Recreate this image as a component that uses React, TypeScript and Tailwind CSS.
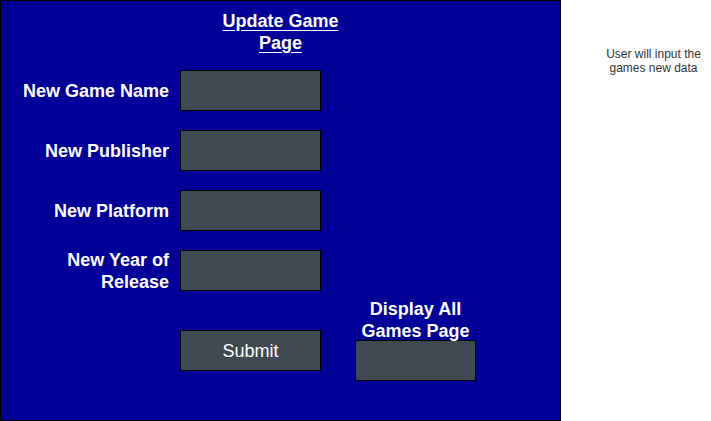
export default function App() {
  const fields = ["New Game Name", "New Publisher", "New Platform", "New Year of Release"];

  return (
    <div className="flex h-[421px] w-[711px] bg-white font-['Liberation_Sans',Arial,sans-serif]">
      <div className="flex h-[421px] w-[561px] shrink-0 flex-col border border-black bg-[#000099] pt-[10px]">
        <div className="mx-auto w-[130px] text-center text-[18px] font-bold leading-[1.2] text-white underline underline-offset-[3px]">
          Update Game Page
        </div>

        <div className="mt-[16px] grid grid-cols-[168px_141px] gap-x-[11px] gap-y-[19px]">
          {fields.map((label) => (
            <div key={label} className="contents">
              <div className="flex h-[41px] items-center justify-end pt-[2px] text-right text-[18px] font-bold leading-[1.2] text-white">
                {label}
              </div>
              <div className="h-[41px] border border-black bg-[#3f4950]" />
            </div>
          ))}
        </div>

        <div className="mt-[9px] flex items-start pl-[179px]">
          <div className="mt-[30px] flex h-[41px] w-[141px] items-center justify-center border border-black bg-[#3f4950] pt-[2px] text-[18px] text-white">
            Submit
          </div>
          <div className="ml-[34px] flex w-[121px] flex-col items-center">
            <div className="relative z-10 -mt-[1px] text-center text-[18px] font-bold leading-[1.2] text-white">
              Display All Games Page
            </div>
            <div className="-mt-[2px] h-[41px] w-[121px] border border-black bg-[#3f4950]" />
          </div>
        </div>
      </div>

      <div className="ml-[35px] mt-[47px] w-[120px] text-center text-[12px] leading-[14px] text-[#333333]">
        User will input the games new data
      </div>
    </div>
  );
}
